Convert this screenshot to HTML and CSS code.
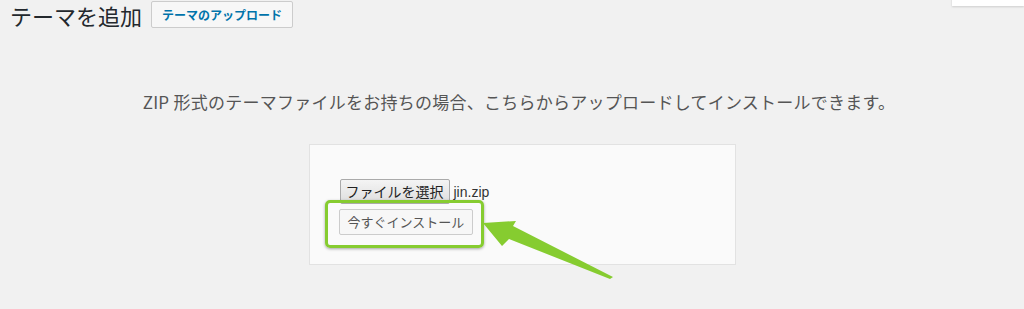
FILE: index.html
```html
<!DOCTYPE html>
<html lang="ja">
<head>
    <meta charset="UTF-8">
    <title>テーマを追加</title>
    <link rel="stylesheet" href="styles.css">
</head>
<body>
    <div class="help-tab"></div>
<div class="wrap">
    <div class="page-head">
        <h1 class="page-title">テーマを追加</h1>
        <a class="title-action" href="#">テーマのアップロード</a>
    </div>

    <p class="upload-note">ZIP 形式のテーマファイルをお持ちの場合、こちらからアップロードしてインストールできます。</p>

    <div class="upload-box">
        <div class="file-row">
            <span class="file-button">ファイルを選択</span>
            <span class="file-name">jin.zip</span>
        </div>
        <div class="install-row">
            <span class="install-button">今すぐインストール</span>
            <!-- 強調枠 -->
            <span class="highlight"></span>
        </div>
        <!-- 矢印 -->
        <svg class="pointer" width="140" height="80" viewBox="0 0 140 80">
            <polygon points="4,13 37,11 34,16 134,67 131,69 30,29 23,36" fill="#86cc30"/>
        </svg>
    </div>
</div>
</body>
</html>
```

FILE: styles.css
```css
html, body {
    min-height: 100%;
}

body {
    margin: 0;
    padding: 0;
    background-color: #f1f1f1;
    font-family: "Noto Sans CJK JP", "Liberation Sans", sans-serif;
    color: #444;
}

.help-tab {
    position: absolute;
    top: -4px;
    right: 0;
    width: 72px;
    height: 10px;
    background-color: #fff;
    box-shadow: 0 1px 2px rgba(0, 0, 0, 0.15);
}

.wrap {
    padding: 0 0 44px 20px;
}

.page-head {
    display: flex;
    align-items: center;
    gap: 9px;
    height: 30px;
    margin-left: -10px;
}

.page-title {
    margin: 0;
    font-size: 22px;
    font-weight: 400;
    line-height: 30px;
    color: #23282d;
}

.title-action {
    display: inline-block;
    margin-top: -2px;
    padding: 0 10px;
    height: 25px;
    line-height: 25px;
    border: 1px solid #ccc;
    border-radius: 2px;
    background-color: #f7f7f7;
    color: #0073aa;
    font-size: 12px;
    font-weight: 600;
    text-decoration: none;
}

.upload-note {
    margin: 58px 0 0 0;
    padding-right: 6px;
    text-align: center;
    font-size: 17px;
    line-height: 28px;
    letter-spacing: 0.25px;
    color: #555;
}

.upload-box {
    position: relative;
    box-sizing: border-box;
    width: 427px;
    height: 121px;
    margin: 28px auto 0;
    padding: 34px 30px 0 30px;
    border: 1px solid #e2e2e2;
    background-color: #fafafa;
}

.file-row {
    display: flex;
    align-items: center;
    gap: 4px;
    height: 25px;
}

.file-button {
    box-sizing: border-box;
    height: 25px;
    padding: 0 5px;
    line-height: 23px;
    border: 1px solid #aaa;
    border-radius: 2px;
    background: linear-gradient(#f4f4f4, #dedede);
    color: #222;
    font-size: 14px;
}

.file-name {
    font-family: "Liberation Sans", sans-serif;
    font-size: 14px;
    color: #333;
}

.install-row {
    position: relative;
    margin-top: 4px;
    margin-left: -1px;
}

.install-button {
    display: inline-block;
    box-sizing: border-box;
    height: 26px;
    padding: 0 8px;
    line-height: 24px;
    border: 1px solid #ccc;
    border-radius: 2px;
    background-color: #f7f7f7;
    color: #555;
    font-size: 13px;
}

.highlight {
    position: absolute;
    top: -8px;
    left: -14px;
    width: 159px;
    height: 48px;
    box-sizing: border-box;
    border: 3px solid #86cc30;
    border-radius: 5px;
    box-shadow: 0 1px 3px rgba(0, 0, 0, 0.35);
}

.pointer {
    position: absolute;
    left: 169px;
    top: 65px;
    overflow: visible;
}
```
